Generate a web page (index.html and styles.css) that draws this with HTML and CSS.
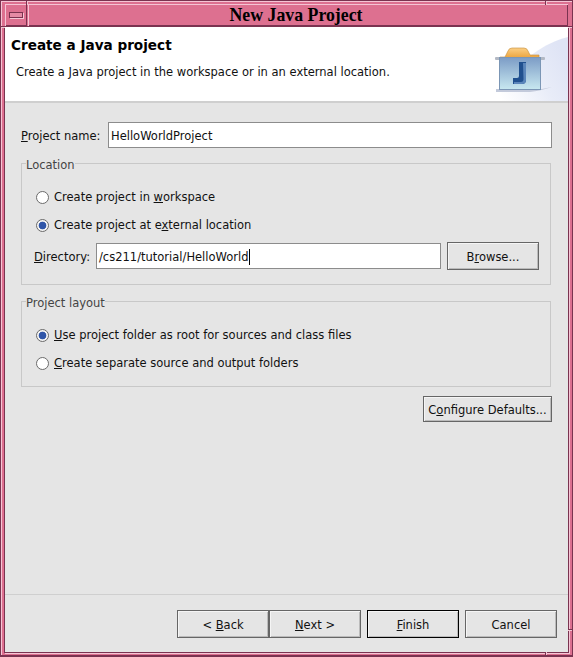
FILE: index.html
```html
<!DOCTYPE html>
<html lang="en">
<head>
    <meta charset="UTF-8">
    <title>New Java Project</title>
    <link rel="stylesheet" href="styles.css">
</head>
<body>

    <div class="window">
        <!-- Resize handle marks on the frame -->
        <span class="notch notch-tl"></span>
        <span class="notch notch-tr"></span>
        <span class="notch notch-lt"></span>
        <span class="notch notch-rt"></span>
        <span class="notch notch-rb"></span>
        <span class="notch notch-br"></span>

        <!-- Title bar -->
        <div class="titlebar">
            <div class="menu-btn"><span class="menu-glyph"></span></div>
            <div class="title">New Java Project</div>
        </div>

        <div class="client">
            <!-- Banner -->
            <div class="banner">
                <div class="banner-text">
                    <h1>Create a Java project</h1>
                    <p>Create a Java project in the workspace or in an external location.</p>
                </div>
                <svg class="banner-icon" width="78" height="74" viewBox="0 0 78 74">
                    <defs>
                        <linearGradient id="wash" x1="0" y1="0.9" x2="1" y2="0.4">
                            <stop offset="0" stop-color="#ffffff"/>
                            <stop offset="0.6" stop-color="#e8ecf8"/>
                            <stop offset="1" stop-color="#dfe4f5"/>
                        </linearGradient>
                        <linearGradient id="box" x1="0" y1="0" x2="0" y2="1">
                            <stop offset="0" stop-color="#7c9cc6"/>
                            <stop offset="1" stop-color="#c8e8f0"/>
                        </linearGradient>
                        <linearGradient id="lid" x1="0" y1="0" x2="0" y2="1">
                            <stop offset="0" stop-color="#fbcf85"/>
                            <stop offset="1" stop-color="#eca540"/>
                        </linearGradient>
                    </defs>
                    <path d="M8 74 C18 44 46 18 78 10 V74 Z" fill="url(#wash)"/>
                    <path d="M6 62 H52 L62 60 Q50 64 40 65 H6 Z" fill="#c3cadb"/>
                    <rect x="5" y="30" width="50" height="3" rx="1" fill="#b3b9c4"/>
                    <path d="M10 30 H15 L18 24 Q19 21 22 21 H34 Q37 21 38 24 L40 28 H49 V30.5 H10 Z" fill="url(#lid)" stroke="#c48c36" stroke-width=".6"/>
                    <rect x="9.5" y="30.5" width="41" height="32" fill="url(#box)" stroke="#7b96b5"/>
                    <path d="M29 35 H36 V53 Q36 57 32 57 H23 V51 H27 Q29 51 29 49 Z" fill="#20508f"/>
                    <path d="M33 36 H36 V53 Q36 57 32 57 H24 V55 H31 Q33.5 55 33.5 52 Z" fill="#5b86bb"/>
                </svg>
            </div>

            <div class="body">
                <div class="name-row">
                    <label class="row-label"><u>P</u>roject name:</label>
                    <div class="text-field">HelloWorldProject</div>
                </div>

                <fieldset class="group location">
                    <legend>Location</legend>
                    <div class="radio-row"><span class="radio"></span><span>Create project in <u>w</u>orkspace</span></div>
                    <div class="radio-row"><span class="radio checked"></span><span>Create project at e<u>x</u>ternal location</span></div>
                    <div class="dir-row">
                        <label class="row-label"><u>D</u>irectory:</label>
                        <div class="text-field">/cs211/tutorial/HelloWorld<span class="caret"></span></div>
                        <button class="btn browse">B<u>r</u>owse...</button>
                    </div>
                </fieldset>

                <fieldset class="group layout">
                    <legend>Project layout</legend>
                    <div class="radio-row"><span class="radio checked"></span><span><u>U</u>se project folder as root for sources and class files</span></div>
                    <div class="radio-row"><span class="radio"></span><span><u>C</u>reate separate source and output folders</span></div>
                </fieldset>

                <div class="defaults-row">
                    <button class="btn defaults">C<u>o</u>nfigure Defaults...</button>
                </div>
            </div>

            <!-- Bottom buttons -->
            <div class="footer">
                <button class="btn wizard">&lt; <u>B</u>ack</button>
                <button class="btn wizard next"><u>N</u>ext &gt;</button>
                <button class="btn wizard finish"><u>F</u>inish</button>
                <button class="btn wizard cancel">Cancel</button>
            </div>
        </div>
    </div>

</body>
</html>
```

FILE: styles.css
```css
body {
    margin: 0;
    font-family: 'DejaVu Sans', sans-serif;
    font-size: 11.5px;
    color: #111;
}

.window {
    position: relative;
    box-sizing: border-box;
    width: 573px;
    height: 657px;
    background: #dd7090;
    border: 1px solid #7a3350;
    border-bottom-width: 2px;
    padding: 3px 4px 3px 4px;
    box-shadow: inset 1px 1px 0 #f5c5d5;
    display: flex;
    flex-direction: column;
}

/* Frame handle marks */
.notch {
    position: absolute;
    background: #7a3350;
    box-shadow: 1px 0 0 #f5c5d5;
}

.notch-tl { left: 25px; top: 0; width: 1px; height: 4px; }
.notch-tr { left: 544px; top: 0; width: 1px; height: 4px; }
.notch-lt { left: 0; top: 25px; width: 4px; height: 1px; box-shadow: 0 1px 0 #f5c5d5; }
.notch-rt { right: 0; top: 25px; width: 4px; height: 1px; box-shadow: 0 1px 0 #f5c5d5; }
.notch-rb { right: 0; top: 628px; width: 4px; height: 1px; box-shadow: 0 1px 0 #f5c5d5; }
.notch-br { left: 544px; bottom: 0; width: 1px; height: 3px; }

/* Title bar */
.titlebar {
    height: 22px;
    display: flex;
    flex: none;
    gap: 1px;
}

.menu-btn,
.title {
    box-sizing: border-box;
    box-shadow: inset 1px 1px 0 #f5c5d5, inset -1px -1px 0 #7a3350;
}

.menu-btn {
    width: 22px;
    display: flex;
    align-items: center;
    justify-content: center;
}

.menu-glyph {
    width: 12px;
    height: 4px;
    background: #e58aa5;
    border: 1px solid #7a3350;
    box-shadow: 1px 1px 0 #f5c5d5;
}

.title {
    flex: 1;
    padding-right: 4px;
    text-align: center;
    font-family: 'Liberation Serif', serif;
    font-weight: bold;
    font-size: 17.8px;
    line-height: 22px;
    color: #000;
}

.client {
    flex: 1;
    margin-top: 1px;
    background: #e5e5e5;
    display: flex;
    flex-direction: column;
    min-height: 0;
    box-shadow: 0 0 0 1px #7a3350, 1px 1px 0 1px #f5c5d5;
}

/* Banner */
.banner {
    height: 74px;
    flex: none;
    background: #fff;
    border-bottom: 2px solid #cfcfcf;
    display: flex;
    justify-content: space-between;
}

.banner-text {
    padding: 8px 0 0 6px;
}

.banner h1 {
    margin: 0;
    font-size: 13.6px;
    line-height: 20px;
    font-weight: bold;
    color: #000;
}

.banner p {
    margin: 9px 0 0 5px;
    line-height: 16px;
}

.banner-icon {
    flex: none;
}

/* Form */
.body {
    flex: 1;
    padding: 19px 16px 0 16px;
}

.name-row {
    display: flex;
    align-items: center;
}

.name-row .row-label {
    width: 87px;
    flex: none;
}

.row-label {
    white-space: nowrap;
    padding-top: 2px;
}

.text-field {
    box-sizing: border-box;
    flex: 1;
    height: 26px;
    line-height: 26px;
    padding-left: 2px;
    background: #fff;
    border: 1px solid #8c8c8c;
}

.caret {
    display: inline-block;
    width: 1px;
    height: 16px;
    background: #000;
    vertical-align: -4px;
}

.group {
    box-sizing: border-box;
    margin: 7px 1px 0 0;
    padding: 0 11px 0 14px;
    min-width: 0;
    border: 1px solid #c8c8c8;
    border-radius: 0;
}

.group legend {
    margin-left: -10px;
    padding: 3px 0 0 0;
    color: #444;
    line-height: 14px;
}

.location {
    height: 130px;
    padding-top: 11px;
}

.layout {
    margin-top: 8px;
    height: 94px;
    padding-top: 11px;
}

.radio-row {
    display: flex;
    align-items: center;
    gap: 5px;
    height: 28px;
}

.radio {
    box-sizing: border-box;
    width: 13px;
    height: 13px;
    border: 1px solid #6b6b6b;
    border-radius: 50%;
    background: #fff;
    flex: none;
}

.radio.checked {
    background: radial-gradient(circle, #2f55a8 0, #2f55a8 3.5px, #f4f4f4 4.2px);
}

.dir-row {
    display: flex;
    align-items: center;
    margin-top: 3px;
    margin-left: -2px;
}

.dir-row .row-label {
    width: 62px;
    flex: none;
}

.btn {
    box-sizing: border-box;
    font-family: inherit;
    font-size: 11.5px;
    color: #111;
    background: #e5e5e5;
    border: 1px solid #666;
    box-shadow: inset 1px 1px 0 #f5f5f5, inset -1px -1px 0 #bbb;
    padding: 2px 0 0 0;
}

.browse {
    width: 92px;
    height: 28px;
    margin-left: 6px;
    flex: none;
}

.defaults-row {
    display: flex;
    justify-content: flex-end;
    margin-top: 9px;
}

.defaults {
    width: 129px;
    height: 26px;
}

/* Footer */
.footer {
    flex: none;
    height: 58px;
    border-top: 1px solid #cfcfcf;
    display: flex;
    padding: 15px 11px 0 0;
    justify-content: flex-end;
    box-sizing: border-box;
}

.wizard {
    width: 92px;
    height: 28px;
}

.finish {
    margin-left: 6px;
    border-color: #000;
}

.cancel {
    margin-left: 6px;
}
```
